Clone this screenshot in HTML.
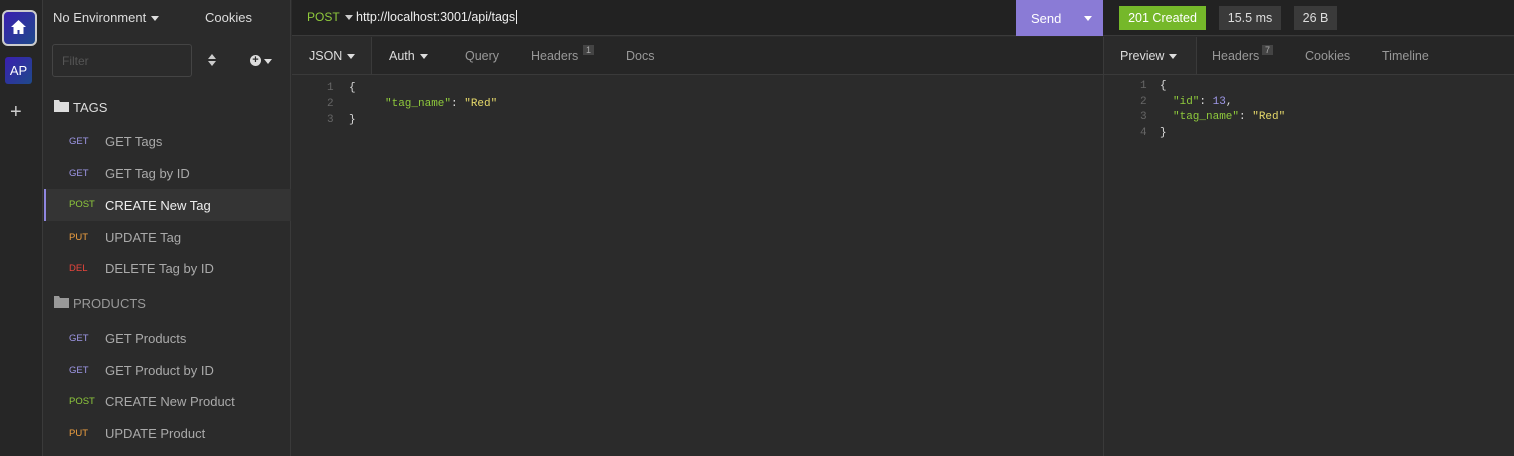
<!DOCTYPE html>
<html><head><style>
*{margin:0;padding:0;box-sizing:border-box}
body{width:1514px;height:456px;overflow:hidden;background:#2b2b2b;font-family:"Liberation Sans",sans-serif;font-size:13px;color:#ccc;position:relative}
.a{position:absolute}
.mono{font-family:"Liberation Mono",monospace;font-size:11px}
.tri{display:inline-block;width:0;height:0;border-left:4px solid transparent;border-right:4px solid transparent;border-top:5px solid #ccc;vertical-align:middle;margin-left:5px}
.item{position:absolute;left:44px;width:247px;height:32px}
.item .m{position:absolute;left:25px;top:10px;font-size:9.5px}
.item .t{position:absolute;left:61px;top:8px;font-size:13px;color:#aaa}
</style></head><body>
<div class="a" style="left:0;top:0;width:43px;height:456px;background:#262626;border-right:1px solid #3a3a3a"></div>
<div class="a" style="left:2px;top:10px;width:35px;height:36px;border:2px solid #ccc;border-radius:6px;background:linear-gradient(135deg,#3a1fb0,#1f4a8a)"></div>
<svg class="a" style="left:10px;top:19px" width="17" height="16" viewBox="0 0 17 16"><path d="M8.5 1L1 8h2.5v7h4v-4h2v4h4V8H16z" fill="#fff"/></svg>
<div class="a" style="left:5px;top:57px;width:27px;height:27px;border-radius:3px;background:linear-gradient(135deg,#3a1fb0,#1f4a8a);color:#fff;font-size:13px;text-align:center;line-height:27px">AP</div>
<div class="a" style="left:10px;top:101px;color:#ccc;font-size:20px">+</div>

<div class="a" style="left:44px;top:0;width:247px;height:456px;background:#2b2b2b;border-right:1px solid #3a3a3a"></div>
<div class="a" style="left:53px;top:10px;color:#ddd">No Environment<span class="tri" style="border-top-color:#ddd"></span></div>
<div class="a" style="left:205px;top:10px;color:#ddd">Cookies</div>
<div class="a" style="left:52px;top:44px;width:140px;height:33px;border:1px solid #444;border-radius:3px;padding:9px 9px;color:#555;font-size:12px">Filter</div>
<div class="a" style="left:208px;top:54px;width:0;height:0;border-left:4px solid transparent;border-right:4px solid transparent;border-bottom:5px solid #ccc"></div>
<div class="a" style="left:208px;top:61px;width:0;height:0;border-left:4px solid transparent;border-right:4px solid transparent;border-top:5px solid #ccc"></div>
<div class="a" style="left:250px;top:55px;width:11px;height:11px;border-radius:50%;background:#ddd;color:#2b2b2b;font-size:11px;line-height:10px;text-align:center;font-weight:bold">+</div>
<div class="a" style="left:264px;top:59px;width:0;height:0;border-left:4px solid transparent;border-right:4px solid transparent;border-top:5px solid #ddd"></div>

<svg class="a" style="left:54px;top:100px" width="15" height="12"><path d="M0 0h5l1 2h9v10H0z" fill="#ddd"/></svg>
<div class="a" style="left:73px;top:100px;color:#ddd">TAGS</div>
<div class="item" style="top:126px"><span class="m" style="color:#9f98e8">GET</span><span class="t">GET Tags</span></div>
<div class="item" style="top:158px"><span class="m" style="color:#9f98e8">GET</span><span class="t">GET Tag by ID</span></div>
<div class="item" style="top:189px;background:#343434;border-left:2px solid #8f86e0"><span class="m" style="color:#8fca3c;left:23px">POST</span><span class="t" style="color:#eee;left:59px;top:9px">CREATE New Tag</span></div>
<div class="item" style="top:222px"><span class="m" style="color:#f0a040">PUT</span><span class="t">UPDATE Tag</span></div>
<div class="item" style="top:253px"><span class="m" style="color:#e8453c">DEL</span><span class="t">DELETE Tag by ID</span></div>
<svg class="a" style="left:54px;top:296px" width="15" height="12"><path d="M0 0h5l1 2h9v10H0z" fill="#999"/></svg>
<div class="a" style="left:73px;top:296px;color:#999">PRODUCTS</div>
<div class="item" style="top:323px"><span class="m" style="color:#9f98e8">GET</span><span class="t">GET Products</span></div>
<div class="item" style="top:355px"><span class="m" style="color:#9f98e8">GET</span><span class="t">GET Product by ID</span></div>
<div class="item" style="top:386px"><span class="m" style="color:#8fca3c">POST</span><span class="t">CREATE New Product</span></div>
<div class="item" style="top:418px"><span class="m" style="color:#f0a040">PUT</span><span class="t">UPDATE Product</span></div>

<div class="a" style="left:292px;top:0;width:1222px;height:36px;background:#222;border-bottom:1px solid #3a3a3a"></div>
<div class="a" style="left:307px;top:10px;color:#8fca3c;font-size:12px">POST<span class="tri"></span></div>
<div class="a" style="left:356px;top:10px;color:#eee;font-size:12.5px">http://localhost:3001/api/tags<span style="border-left:1px solid #eee;margin-left:1px"></span></div>
<div class="a" style="left:1016px;top:0;width:87px;height:36px;background:#8a7bd6"></div>
<div class="a" style="left:1031px;top:11px;color:#fff;font-size:13px">Send</div>
<div class="a" style="left:1084px;top:16px;width:0;height:0;border-left:4px solid transparent;border-right:4px solid transparent;border-top:5px solid #fff"></div>
<div class="a" style="left:1119px;top:6px;width:87px;height:24px;background:#75b82a;color:#fff;text-align:center;line-height:24px;font-size:12.5px">201 Created</div>
<div class="a" style="left:1219px;top:6px;width:62px;height:24px;background:#3a3a3a;color:#ddd;text-align:center;line-height:24px;font-size:12.5px">15.5 ms</div>
<div class="a" style="left:1294px;top:6px;width:43px;height:24px;background:#3a3a3a;color:#ddd;text-align:center;line-height:24px;font-size:12.5px">26 B</div>

<div class="a" style="left:1103px;top:37px;width:1px;height:419px;background:#3a3a3a"></div>
<div class="a" style="left:292px;top:74px;width:811px;height:1px;background:#3a3a3a"></div>
<div class="a" style="left:371px;top:37px;width:1px;height:38px;background:#3a3a3a"></div>
<div class="a" style="left:372px;top:37px;width:731px;height:37px;background:#262626"></div>
<div class="a" style="left:309px;top:49px;color:#ddd;font-size:12.5px">JSON<span class="tri" style="border-top-color:#ddd"></span></div>
<div class="a" style="left:389px;top:49px;color:#ddd;font-size:12.5px">Auth<span class="tri" style="border-top-color:#ddd"></span></div>
<div class="a" style="left:465px;top:49px;color:#999;font-size:12.5px">Query</div>
<div class="a" style="left:531px;top:49px;color:#999;font-size:12.5px">Headers</div>
<div class="a" style="left:583px;top:45px;background:#444;color:#aaa;font-size:9px;padding:0 3px">1</div>
<div class="a" style="left:626px;top:49px;color:#999;font-size:12.5px">Docs</div>
<div class="a mono" style="left:327px;top:80px;line-height:16px;color:#666">1<br>2<br>3</div>
<div class="a mono" style="left:349px;top:80px;line-height:16px;color:#ddd">{<br><span style="padding-left:36px;color:#8fca3c">"tag_name"</span>: <span style="color:#e6d96a">"Red"</span><br>}</div>

<div class="a" style="left:1104px;top:74px;width:410px;height:1px;background:#3a3a3a"></div>
<div class="a" style="left:1196px;top:37px;width:318px;height:37px;background:#262626;border-left:1px solid #3a3a3a"></div>
<div class="a" style="left:1120px;top:49px;color:#ddd;font-size:12.5px">Preview<span class="tri" style="border-top-color:#ddd"></span></div>
<div class="a" style="left:1212px;top:49px;color:#999;font-size:12.5px">Headers</div>
<div class="a" style="left:1262px;top:45px;background:#444;color:#aaa;font-size:9px;padding:0 3px">7</div>
<div class="a" style="left:1305px;top:49px;color:#999;font-size:12.5px">Cookies</div>
<div class="a" style="left:1382px;top:49px;color:#999;font-size:12.5px">Timeline</div>
<div class="a mono" style="left:1140px;top:79px;line-height:15.5px;color:#666">1<br>2<br>3<br>4</div>
<div class="a mono" style="left:1160px;top:79px;line-height:15.5px;color:#ddd">{<br><span style="padding-left:13px;color:#8fca3c">"id"</span>: <span style="color:#9f98e8">13</span>,<br><span style="padding-left:13px;color:#8fca3c">"tag_name"</span>: <span style="color:#e6d96a">"Red"</span><br>}</div>
</body></html>
